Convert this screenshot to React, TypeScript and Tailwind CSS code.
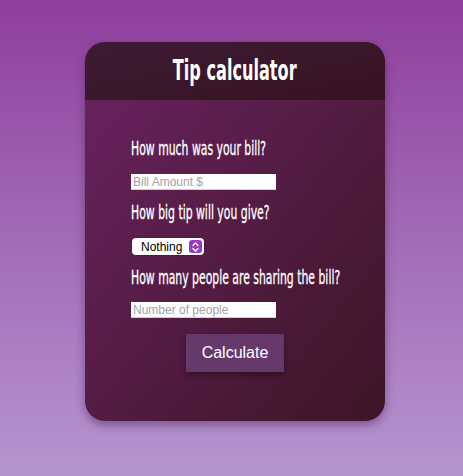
import React from "react";

const oswald = { fontFamily: '"DejaVu Sans Condensed", "DejaVu Sans", sans-serif' };

function Label({ children }: { children: React.ReactNode }) {
  return (
    <div className="h-[24px] flex items-center text-white text-[19px] leading-[24px] whitespace-nowrap origin-left scale-x-[0.635] [-webkit-text-stroke:0.3px_white]" style={oswald}>
      {children}
    </div>
  );
}

export default function App() {
  return (
    <div className="min-h-[476px] w-full bg-gradient-to-b from-[#8e3e9c] to-[#b595d0] pt-[42px] pb-[54px] font-['Liberation_Sans',sans-serif]">
      <div className="ml-[85px] w-[300px] rounded-[20px] overflow-hidden shadow-[0_4px_10px_rgba(60,20,70,0.45)] bg-gradient-to-br from-[#6b2362] to-[#3e1426]">
        <div className="h-[58px] flex items-center justify-center bg-gradient-to-br from-[#3e1b36] to-[#36131f]">
          <span className="text-white text-[28px] font-bold inline-block scale-x-[0.64]" style={oswald}>Tip calculator</span>
        </div>
        <div className="pl-[46px] pt-[36px] pb-[49px] flex flex-col">
          <Label>How much was your bill?</Label>
          <input
            className="mt-[14px] w-[145px] h-[16px] bg-white px-[2px] text-[12px] text-black placeholder:text-[#a3a3a3] outline-none border-b border-[#d0d0d0]"
            placeholder="Bill Amount $"
          />
          <div className="mt-[10px]"><Label>How big tip will you give?</Label></div>
          <div className="mt-[14px] ml-[1px] w-[72px] h-[17px] bg-white rounded-[4px] flex items-center justify-between pl-[9px] pr-[2px] shadow-[0_0_0_0.5px_rgba(0,0,0,0.25)]">
            <span className="text-[12px] text-black leading-none">Nothing</span>
            <span className="w-[13px] h-[13px] rounded-[3px] bg-[#9b3bbd] flex items-center justify-center">
              <svg width="7" height="10" viewBox="0 0 7 10" fill="none" stroke="white" strokeWidth="1.4" strokeLinecap="round" strokeLinejoin="round">
                <path d="M1 3.5 L3.5 1 L6 3.5" />
                <path d="M1 6.5 L3.5 9 L6 6.5" />
              </svg>
            </span>
          </div>
          <div className="mt-[10px]"><Label>How many people are sharing the bill?</Label></div>
          <input
            className="mt-[13px] w-[145px] h-[16px] bg-white px-[2px] text-[12px] text-black placeholder:text-[#a3a3a3] outline-none border-b border-[#d0d0d0]"
            placeholder="Number of people"
          />
          <button className="mt-[16px] ml-[55px] w-[98px] h-[38px] bg-[#653a6b] text-white text-[16px] shadow-[0_3px_6px_rgba(0,0,0,0.35)]">
            Calculate
          </button>
        </div>
      </div>
    </div>
  );
}
